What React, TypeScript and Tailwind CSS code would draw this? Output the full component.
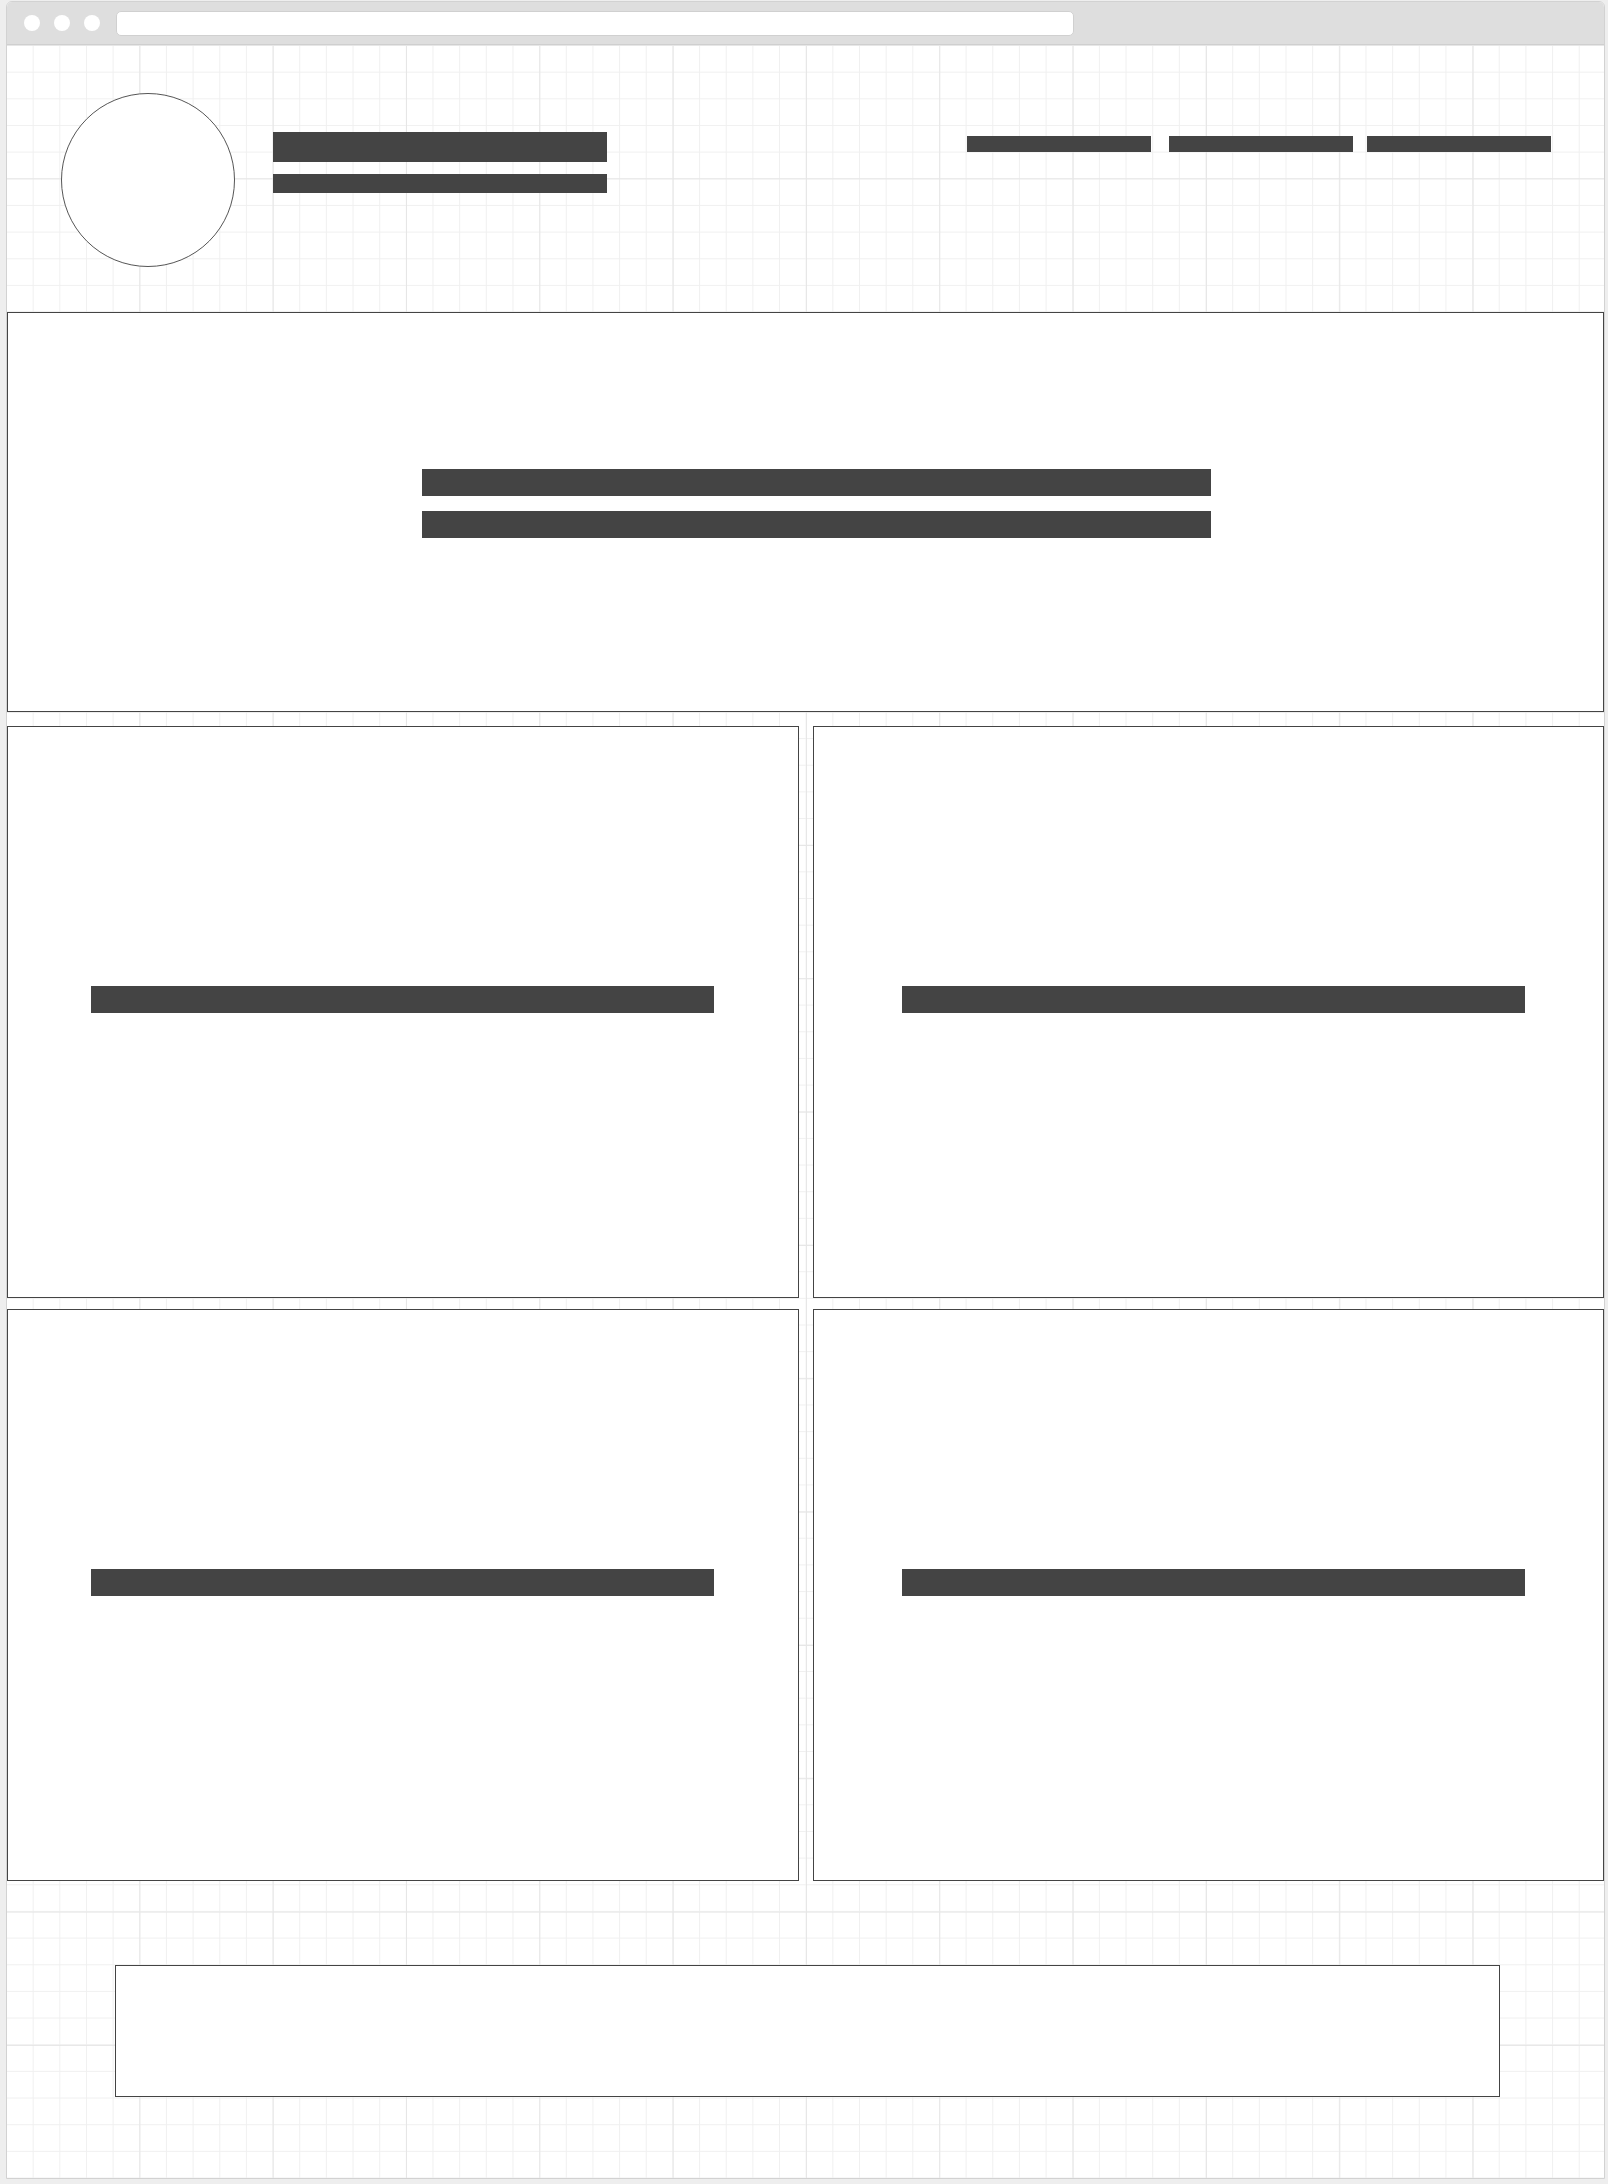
const Bar = ({ className }: { className: string }) => (
  <div className={`shrink-0 bg-[#444444] ${className}`} />
);

const Card = ({ inset }: { inset: string }) => (
  <section className={`flex h-[572px] border border-[#444444] bg-white pt-[259px] ${inset}`}>
    <Bar className="h-[27px] w-[623px]" />
  </section>
);

const App = () => {
  return (
    <div className="min-h-[2184px] bg-[#eeeeee] pl-[6px] pt-[1px]">
      <div className="w-[1599px] overflow-hidden rounded-t-[6px] border border-[#d2d2d2] bg-white">
        {/* browser chrome */}
        <div className="flex h-[43px] items-center border-b border-[#cfcfcf] bg-[#dedede] pl-[17px]">
          <div className="flex gap-[14px]">
            <span className="h-[16px] w-[16px] rounded-full bg-white" />
            <span className="h-[16px] w-[16px] rounded-full bg-white" />
            <span className="h-[16px] w-[16px] rounded-full bg-white" />
          </div>
          <div className="ml-[16px] h-[25px] w-[958px] rounded-[5px] border border-[#d0d0d0] bg-white" />
        </div>

        {/* page canvas */}
        <div className="[background-image:linear-gradient(to_right,#e6e6e6_1px,transparent_1px),linear-gradient(to_bottom,#e6e6e6_1px,transparent_1px),linear-gradient(to_right,#f0f0f0_1px,transparent_1px),linear-gradient(to_bottom,#f0f0f0_1px,transparent_1px)] [background-position:-1px_0] [background-size:133.333px_133.333px,133.333px_133.333px,26.6667px_26.6667px,26.6667px_26.6667px]">
          <header className="flex h-[267px] items-start pl-[54px] pt-[48px]">
            <div className="h-[174px] w-[174px] shrink-0 rounded-full border border-[#555555] bg-white" />
            <div className="ml-[38px] mt-[39px] flex flex-col gap-[12px]">
              <Bar className="h-[30px] w-[334px]" />
              <Bar className="h-[19px] w-[334px]" />
            </div>
            <nav className="ml-auto mr-[53px] mt-[43px] flex">
              <Bar className="h-[16px] w-[184px]" />
              <Bar className="ml-[18px] h-[16px] w-[184px]" />
              <Bar className="ml-[14px] h-[16px] w-[184px]" />
            </nav>
          </header>

          <section className="h-[400px] border border-[#444444] bg-white pl-[414px] pt-[156px]">
            <div className="flex flex-col gap-[15px]">
              <Bar className="h-[27px] w-[789px]" />
              <Bar className="h-[27px] w-[789px]" />
            </div>
          </section>

          <div className="mt-[14px] grid grid-cols-2 gap-x-[14px] gap-y-[11px]">
            <Card inset="pl-[83px]" />
            <Card inset="pl-[88px]" />
            <Card inset="pl-[83px]" />
            <Card inset="pl-[88px]" />
          </div>

          <footer className="pb-[81px] pl-[108px] pt-[84px]">
            <div className="h-[132px] w-[1385px] border border-[#444444] bg-white" />
          </footer>
        </div>
      </div>
    </div>
  );
};

export default App;
